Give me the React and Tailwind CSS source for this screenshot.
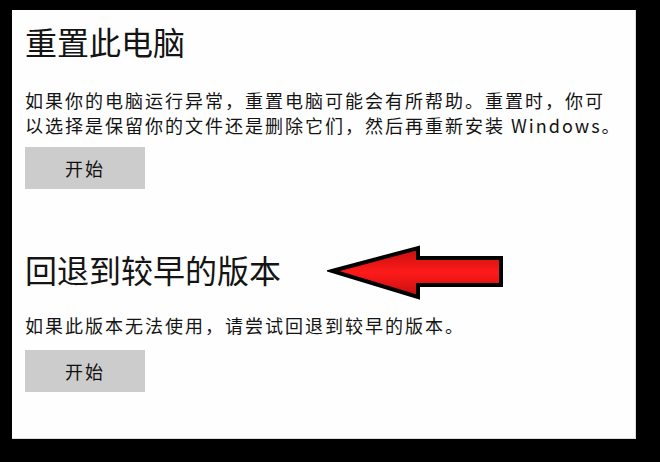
import React from "react";

const cjk = { fontFamily: '"Noto Sans CJK SC", "Noto Sans", sans-serif' };

function ArrowLeft() {
  return (
    <svg width="178" height="57" viewBox="0 0 178 57" className="shrink-0">
      <defs>
        <linearGradient id="arrowFill" x1="0" y1="0" x2="0" y2="1">
          <stop offset="0" stopColor="#c40f0f" />
          <stop offset="0.5" stopColor="#ff1a1a" />
          <stop offset="1" stopColor="#c40f0f" />
        </linearGradient>
      </defs>
      <polygon
        points="5,27 91,4 91,14 174,14 174,41 91,41 91,53"
        fill="url(#arrowFill)"
        stroke="#000"
        strokeWidth="4"
        strokeLinejoin="miter"
      />
    </svg>
  );
}

function StartButton() {
  return (
    <div className="w-[120px] h-[42px] bg-[#cccccc] flex items-center justify-center text-[18px] text-[#111] tracking-[2px]">
      开始
    </div>
  );
}

export default function App() {
  return (
    <div className="w-[660px] h-[462px] bg-black pt-[10px] pl-[12px]" style={cjk}>
      <div className="w-[624px] h-[429px] bg-[#fefefe] border-b border-r border-[#dcdcdc] pl-[13px] pt-[11px] flex flex-col items-start text-[#141414]">
        <div className="text-[32px] leading-[40px]">重置此电脑</div>
        <div className="mt-[27px] text-[18px] leading-[25px] tracking-[2px]">
          如果你的电脑运行异常，重置电脑可能会有所帮助。重置时，你可
          <br />
          以选择是保留你的文件还是删除它们，然后再重新安装 Windows。
        </div>
        <div className="mt-[9px]">
          <StartButton />
        </div>
        <div className="mt-[55px] flex items-start gap-[46px]">
          <div className="mt-[5px] text-[32px] leading-[40px]">回退到较早的版本</div>
          <ArrowLeft />
        </div>
        <div className="mt-[12px] text-[18px] leading-[25px] tracking-[2px]">
          如果此版本无法使用，请尝试回退到较早的版本。
        </div>
        <div className="mt-[12px]">
          <StartButton />
        </div>
      </div>
    </div>
  );
}
